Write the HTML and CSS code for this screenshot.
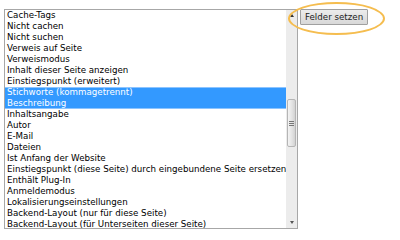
FILE: index.html
```html
<!DOCTYPE html>
<html>
<head>
<meta charset="utf-8">
<link rel="stylesheet" href="styles.css">
</head>
<body>
<div class="wrap">
  <div class="listbox">
    <div class="options">
      <div class="opt">Cache-Tags</div>
      <div class="opt">Nicht cachen</div>
      <div class="opt">Nicht suchen</div>
      <div class="opt">Verweis auf Seite</div>
      <div class="opt">Verweismodus</div>
      <div class="opt">Inhalt dieser Seite anzeigen</div>
      <div class="opt">Einstiegspunkt (erweitert)</div>
      <div class="opt sel first">Stichworte (kommagetrennt)</div>
      <div class="opt sel last">Beschreibung</div>
      <div class="opt">Inhaltsangabe</div>
      <div class="opt">Autor</div>
      <div class="opt">E-Mail</div>
      <div class="opt">Dateien</div>
      <div class="opt">Ist Anfang der Website</div>
      <div class="opt">Einstiegspunkt (diese Seite) durch eingebundene Seite ersetzen</div>
      <div class="opt">Enthält Plug-In</div>
      <div class="opt">Anmeldemodus</div>
      <div class="opt">Lokalisierungseinstellungen</div>
      <div class="opt">Backend-Layout (nur für diese Seite)</div>
      <div class="opt">Backend-Layout (für Unterseiten dieser Seite)</div>
    </div>
    <div class="scrollbar">
      <div class="arrow up"></div>
      <div class="track">
        <div class="thumb"><span class="grip"></span></div>
      </div>
      <div class="arrow down"></div>
    </div>
  </div>
  <button class="btn">Felder setzen</button>
  <div class="ring"></div>
</div>
</body>
</html>
```
FILE: styles.css
```css
html, body {
  margin: 0;
  padding: 0;
  background: #fff;
}
body {
  font-family: "DejaVu Sans", Verdana, sans-serif;
  font-size: 8.7px;
  color: #000;
}
.wrap {
  position: relative;
  display: flex;
  align-items: flex-start;
  gap: 2px;
  padding: 9px 0 0 4px;
}
.listbox {
  display: flex;
  width: 292px;
  height: 218px;
  border: 1px solid #a7a7a7;
  background: #fff;
}
.options {
  flex: 1;
  overflow: hidden;
}
.opt {
  height: 11px;
  line-height: 11px;
  padding-left: 2px;
  white-space: nowrap;
  overflow: hidden;
}
.opt.sel {
  background: #3399ff;
  color: #fff;
}
.opt.sel.first {
  box-shadow: inset 0 1px 0 #8cc4ff;
}
.opt.sel.last {
  box-shadow: inset 0 -1px 0 #8cc4ff;
}
.scrollbar {
  width: 11px;
  background: #ececec;
  display: flex;
  flex-direction: column;
}
.arrow {
  height: 11px;
  display: flex;
  justify-content: center;
  align-items: center;
}
.arrow::before {
  content: "";
  width: 0;
  height: 0;
  border-left: 2.5px solid transparent;
  border-right: 2.5px solid transparent;
}
.arrow.up::before {
  border-bottom: 3px solid #333;
}
.arrow.down::before {
  border-top: 3px solid #555;
}
.track {
  flex: 1;
  padding-top: 78px;
}
.thumb {
  margin: 0 0 0 1px;
  width: 9px;
  height: 48px;
  box-sizing: border-box;
  border: 1px solid #b5b5b5;
  border-radius: 2px;
  background: linear-gradient(to right, #f4f4f4, #e2e2e2 60%, #d2d2d2);
  display: flex;
  justify-content: center;
  align-items: center;
}
.grip {
  width: 5px;
  height: 5px;
  background: repeating-linear-gradient(to bottom, #777 0, #777 1px, transparent 1px, transparent 2px);
}
.btn {
  font-family: "DejaVu Sans", Verdana, sans-serif;
  font-size: 8.7px;
  color: #222;
  height: 16px;
  padding: 0 4px;
  margin: 0;
  border: 1px solid #a0a0a0;
  border-radius: 1px;
  background: linear-gradient(#ececec, #d8d8d8);
  line-height: 14px;
}
.ring {
  position: absolute;
  left: 288px;
  top: 2px;
  width: 93px;
  height: 29px;
  border: 2px solid #f5bd4f;
  border-radius: 50%;
  pointer-events: none;
}
```
